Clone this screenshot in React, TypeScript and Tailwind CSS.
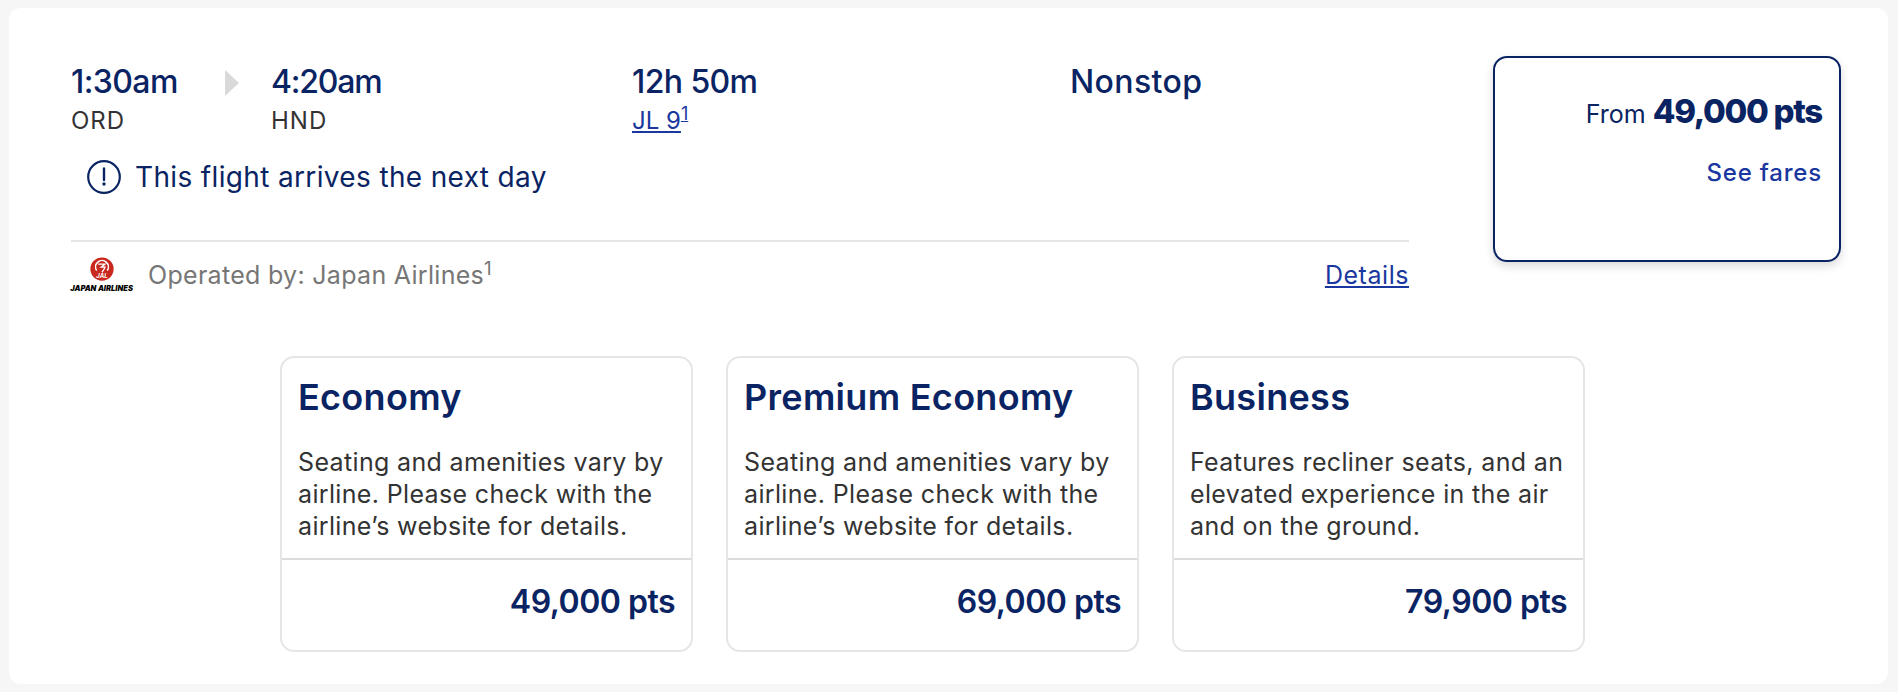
const NAVY = "text-[#0a2463]";

const FARES = [
  { name: "Economy", desc: ["Seating and amenities vary by", "airline. Please check with the", "airline’s website for details."], pts: "49,000 pts" },
  { name: "Premium Economy", desc: ["Seating and amenities vary by", "airline. Please check with the", "airline’s website for details."], pts: "69,000 pts" },
  { name: "Business", desc: ["Features recliner seats, and an", "elevated experience in the air", "and on the ground."], pts: "79,900 pts" },
];

const JalLogo = () => (
  <div className="flex w-[61px] flex-col items-center">
    <svg viewBox="0 0 32 32" className="h-[24px] w-[24px]">
      <circle cx="16" cy="16" r="15.5" fill="#c8281e" />
      <path d="M9 18a8.5 8.5 0 1 1 14 0" fill="none" stroke="#fff" strokeWidth="2" />
      <path d="M11 9.5h9l-5 4h5c-1 3-3 5-4 7" fill="none" stroke="#fff" strokeWidth="1.8" />
      <text x="16" y="28" textAnchor="middle" fontSize="8" fontWeight="700" fontStyle="italic" fill="#fff">JAL</text>
    </svg>
    <span className="mt-[4px] whitespace-nowrap text-[7.5px] leading-[8px] font-black italic text-black">JAPAN AIRLINES</span>
  </div>
);

const FareCard = ({ name, desc, pts }: { name: string; desc: string[]; pts: string }) => (
  <div className="flex h-[296px] w-[413px] flex-col rounded-[14px] border-2 border-[#e6e6e6]">
    <div className="h-[202px] border-b-2 border-[#dcdcdc] px-[16px] pt-[17px]">
      <h3 className={`text-[36px] leading-[44px] font-semibold tracking-[0.3px] ${NAVY}`}>{name}</h3>
      <p className="mt-[27px] text-[25px] leading-[32px] tracking-[0.35px] text-[#333]">
        {desc.map((l) => (
          <span key={l} className="block whitespace-nowrap">{l}</span>
        ))}
      </p>
    </div>
    <div className={`px-[16px] pt-[22px] text-right text-[32px] leading-[40px] font-semibold tracking-[-0.5px] ${NAVY}`}>{pts}</div>
  </div>
);

export default function App() {
  return (
    <div className="h-[692px] w-[1898px] bg-[#f6f6f6] pt-2 pl-[9px] font-['Inter','Liberation_Sans',sans-serif]">
      <div className="h-[676px] w-[1879px] rounded-[12px] bg-white pt-[48px] pl-[62px]">
        <div className="flex">
          <div className="w-[1338px]">
            <div className="flex h-[186px] flex-col border-b-2 border-[#e6e6e6] pt-[6px]">
              <div className="flex">
                <div className="w-[154px]">
                  <div className={`text-[32px] leading-[40px] font-medium tracking-[-0.6px] ${NAVY}`}>1:30am</div>
                  <div className="mt-[5px] text-[24px] leading-[28px] tracking-[1px] text-[#333]">ORD</div>
                </div>
                <div className="flex w-[46px] pt-[8px]">
                  <svg viewBox="0 0 14 26" className="h-[26px] w-[14px]">
                    <path d="M0 0 14 13 0 26Z" fill="#d9d9d9" />
                  </svg>
                </div>
                <div className="w-[361px]">
                  <div className={`text-[32px] leading-[40px] font-medium tracking-[-1.2px] ${NAVY}`}>4:20am</div>
                  <div className="mt-[5px] text-[24px] leading-[28px] tracking-[1px] text-[#333]">HND</div>
                </div>
                <div className="w-[438px]">
                  <div className={`text-[32px] leading-[40px] font-medium tracking-[-0.6px] ${NAVY}`}>12h 50m</div>
                  <div className="mt-[5px] text-[24px] leading-[28px] text-[#1a37a0]">
                    <span className="underline">JL 9</span><sup className="underline">1</sup>
                  </div>
                </div>
                <div className={`text-[32px] leading-[40px] font-medium tracking-[0.4px] ${NAVY}`}>Nonstop</div>
              </div>
              <div className="mt-[24px] flex items-center gap-[14px] pl-[16px]">
                <svg viewBox="0 0 34 34" className="h-[34px] w-[34px] text-[#0a2463]">
                  <circle cx="17" cy="17" r="15.8" fill="none" stroke="currentColor" strokeWidth="2.2" />
                  <path d="M17 8.5v11.5" stroke="currentColor" strokeWidth="2.4" strokeLinecap="round" />
                  <circle cx="17" cy="24" r="1.7" fill="currentColor" />
                </svg>
                <span className={`text-[28px] leading-[36px] tracking-[0.35px] ${NAVY}`}>This flight arrives the next day</span>
              </div>
            </div>
            <div className="flex items-center justify-between pt-[15px]">
              <div className="flex items-center gap-[16px]">
                <JalLogo />
                <span className="text-[25px] leading-[32px] tracking-[0.3px] text-[#767676]">Operated by: Japan Airlines<sup>1</sup></span>
              </div>
              <a className="text-[25px] leading-[32px] tracking-[0.55px] text-[#1a37a0] underline">Details</a>
            </div>
          </div>
          <div className="ml-[84px] h-[206px] w-[348px] rounded-[14px] border-2 border-[#0a2463] px-[17px] pt-[31px] text-right shadow-[0_4px_10px_rgba(0,0,0,0.15)]">
            <div className={`whitespace-nowrap leading-[44px] ${NAVY}`}>
              <span className="text-[25px]">From </span>
              <span className="text-[33px] font-extrabold tracking-[-1.3px]">49,000 pts</span>
            </div>
            <div className="mt-[18px] text-[24px] leading-[32px] font-medium tracking-[0.8px] text-[#1a37a0]">See fares</div>
          </div>
        </div>
        <div className="mt-[63px] flex gap-[33px] pl-[209px]">
          {FARES.map((f) => (
            <FareCard key={f.name} {...f} />
          ))}
        </div>
      </div>
    </div>
  );
}
